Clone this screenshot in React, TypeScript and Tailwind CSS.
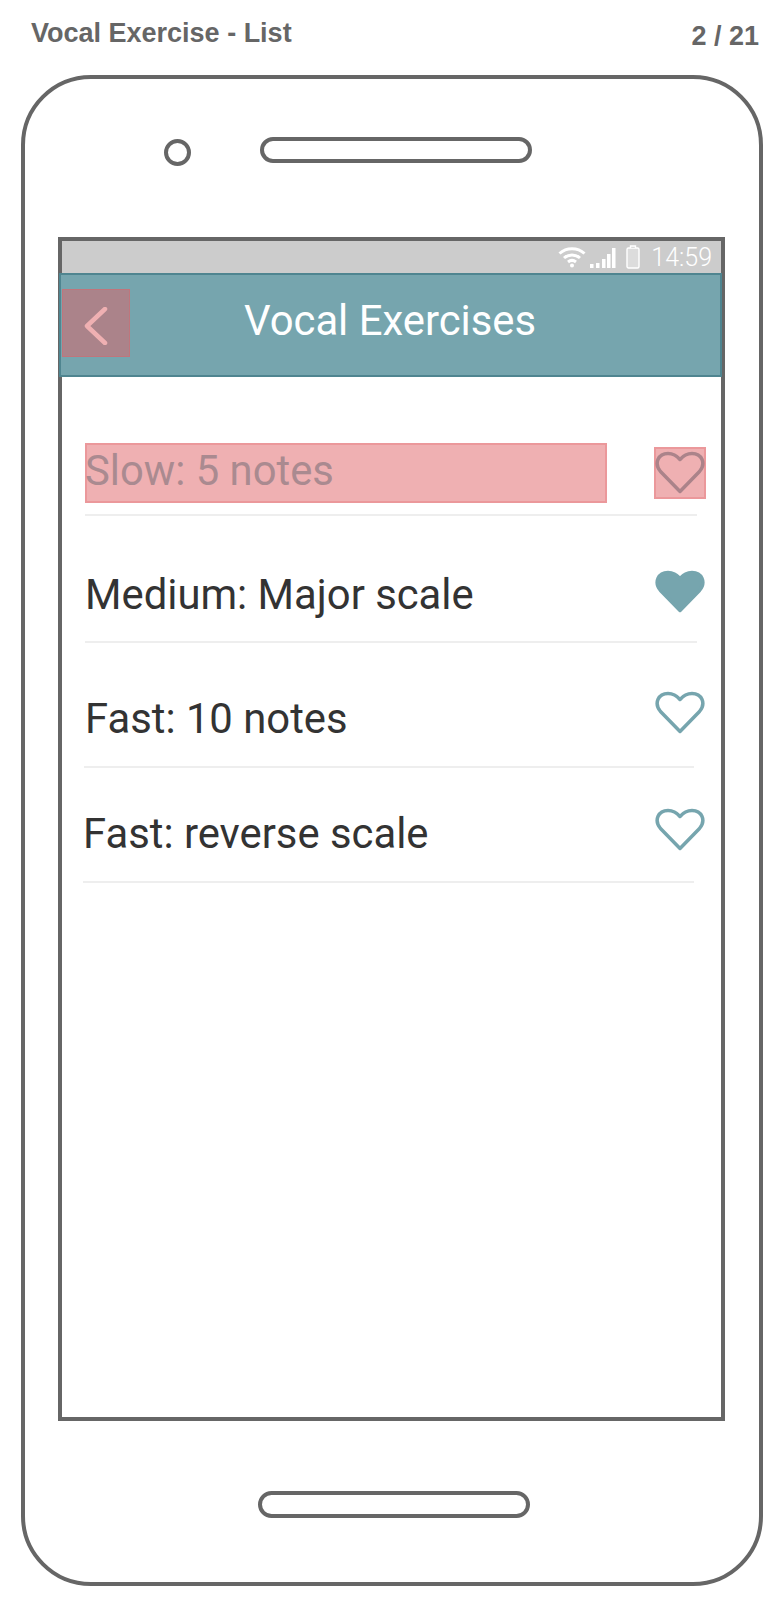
import React from 'react';

const HeartIcon = ({ filled }: { filled?: boolean }) => (
  <svg viewBox="0 0 50 43" className="w-[50px] h-[43px]">
    <path
      d="M25 40.5 L5.5 20.5 C-1.5 12 3.5 2.5 13 2.5 C18 2.5 22 5 25 8.5 C28 5 32 2.5 37 2.5 C46.5 2.5 51.5 12 44.5 20.5 Z"
      fill={filled ? '#76a5ae' : 'none'}
      stroke="#76a5ae"
      strokeWidth="3.5"
      strokeLinejoin="round"
    />
  </svg>
);

const WifiIcon = () => (
  <svg viewBox="0 0 28 22" className="w-[28px] h-[22px]" fill="none" stroke="#fff" strokeWidth="3">
    <path d="M1.5 7.5 C8.5 1 19.5 1 26.5 7.5" />
    <path d="M6 12 C10.5 8 17.5 8 22 12" />
    <path d="M10 16 C12.5 14 15.5 14 18 16" />
    <circle cx="14" cy="19.5" r="2" fill="#fff" stroke="none" />
  </svg>
);

const SignalIcon = () => (
  <svg viewBox="0 0 26 20" className="w-[26px] h-[20px]" fill="#fff">
    <rect x="0" y="16" width="3.5" height="4" />
    <rect x="6" y="15" width="3.5" height="5" />
    <rect x="12" y="11" width="3.5" height="9" />
    <rect x="17" y="6" width="3.5" height="14" />
    <rect x="22" y="0" width="3.5" height="20" />
  </svg>
);

const BatteryIcon = () => (
  <svg viewBox="0 0 14 24" className="w-[14px] h-[24px]" fill="#dcdcdc" stroke="#fff" strokeWidth="1.4">
    <rect x="1" y="3" width="12" height="20" rx="1.5" />
    <path d="M4.5 3 V1 H9.5 V3" />
  </svg>
);

const exercises = [
  { label: 'Slow: 5 notes', row: 'h-[137px] pt-[64px] pl-[23px]', line: 'ml-[23px] w-[612px]', text: 'mt-[6px] text-[#74b3ba]', heart: 'mt-[10px]' },
  { label: 'Medium: Major scale', row: 'h-[125px] pt-[51px] pl-[23px]', line: 'ml-[23px] w-[612px]', text: 'mt-[4px] text-[#333333]', heart: 'mt-[3px]' },
  { label: 'Fast: 10 notes', row: 'h-[123px] pt-[47px] pl-[23px]', line: 'ml-[22px] w-[610px]', text: 'mt-[5px] text-[#333333]', heart: 'mt-[1px]' },
  { label: 'Fast: reverse scale', row: 'h-[113px] pt-[38px] pl-[21px]', line: 'ml-[21px] w-[611px]', text: 'mt-[4px] text-[#333333]', heart: 'mt-[2px]' },
];

export default function App() {
  return (
    <div className="w-[784px] h-[1607px] bg-white overflow-hidden font-['Roboto',sans-serif]">
      {/* Page title */}
      <div className="h-[75px] pl-[31px] pr-[25px] pt-[17px] flex justify-between font-['Liberation_Sans',sans-serif] font-bold text-[#666666] text-[27px]">
        <span className="leading-[32px]">Vocal Exercise - List</span>
        <span className="leading-[32px] mt-[3px]">2 / 21</span>
      </div>

      {/* Phone */}
      <div className="ml-[21px] w-[742px] h-[1511px] border-[4px] border-[#666666] rounded-[70px] box-border">
        <div className="h-[57px] flex items-start">
          <div className="ml-[139px] mt-[60px] w-[27px] h-[27px] rounded-full border-[4px] border-[#666666]" />
          <div className="ml-[69px] mt-[58px] w-[272px] h-[26px] rounded-full border-[4px] border-[#666666]" />
        </div>

        {/* Screen */}
        <div className="ml-[33px] mt-[101px] w-[667px] h-[1184px] border-[4px] border-[#666666] box-border relative">
          {/* Status bar */}
          <div className="h-[32px] bg-[#cccccc] flex items-center justify-end pr-[9px]">
            <WifiIcon />
            <div className="ml-[4px] mt-[2px]"><SignalIcon /></div>
            <div className="ml-[10px]"><BatteryIcon /></div>
            <span className="ml-[11px] text-white text-[25px] font-light leading-[28px] mt-[1px]">14:59</span>
          </div>

          {/* App bar */}
          <div className="-ml-[3px] w-[663px] h-[104px] bg-[#76a5ae] border-2 border-[#4f8590] flex items-start box-border">
            <svg viewBox="0 0 24 38" className="ml-[23px] mt-[32px] w-[24px] h-[38px]" fill="none" stroke="#ffffff" strokeWidth="4.5" strokeLinecap="round" strokeLinejoin="round">
              <path d="M21 2 L3 19 L21 36" />
            </svg>
            <span className="ml-[136px] mt-[22px] text-white text-[41.8px] leading-[48px]">Vocal Exercises</span>
          </div>

          {/* Exercise list */}
          {exercises.map((item, index) => (
            <div key={index}>
              <div className={`flex items-start justify-between pr-[16px] ${item.row}`}>
                <span className={`text-[41.8px] leading-[48px] ${item.text}`}>{item.label}</span>
                <div className={item.heart}><HeartIcon filled={index === 1} /></div>
              </div>
              <div className={`h-[2px] bg-[#eeeeee] ${item.line}`} />
            </div>
          ))}

          {/* Review markers */}
          <div className="absolute left-0 top-[48px] w-[68px] h-[68px] bg-[#e06166]/50 border border-[#e06166]/40" />
          <div className="absolute left-[23px] top-[202px] w-[522px] h-[60px] bg-[#e06166]/50 border-2 border-[#e06166]/30" />
          <div className="absolute left-[592px] top-[206px] w-[52px] h-[52px] bg-[#e06166]/50 border-2 border-[#e06166]/30" />
        </div>

        <div className="ml-[233px] mt-[70px] w-[272px] h-[27px] rounded-full border-[4px] border-[#666666]" />
      </div>
    </div>
  );
}
